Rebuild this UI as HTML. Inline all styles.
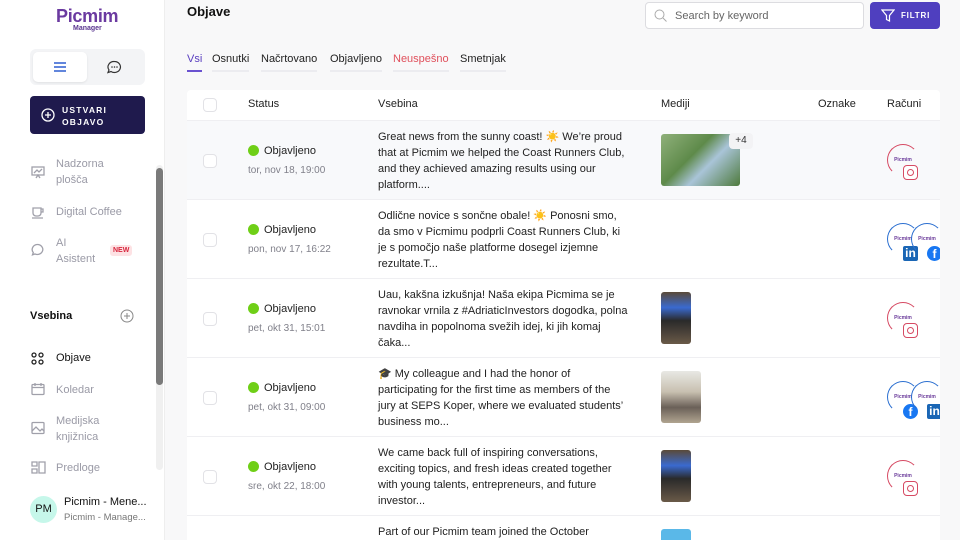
<!DOCTYPE html>
<html style="width:960px;height:540px;overflow:hidden"><head><meta charset="utf-8"><style>
*{box-sizing:border-box;margin:0;padding:0}
body{width:960px;height:540px;overflow:hidden;background:#f8f8f9;font-family:"Liberation Sans",sans-serif;position:relative;color:#1e1e24}
.a{position:absolute}
.side{left:0;top:0;width:165px;height:540px;background:#fff;border-right:1px solid #eee}
.nav{font-size:11px;color:#9a9aa6;line-height:16px}
.ic{stroke:#a0a0aa;fill:none;stroke-width:1.3}
.tab{font-size:11px;top:53px;padding-bottom:5px;border-bottom:2px solid #ececf0;color:#222}
.tbl{left:187px;top:90px;width:753px;height:450px;background:#fff;border-radius:4px 4px 0 0}
.th{font-size:11px;top:98px;color:#222}
.cb{width:14px;height:14px;border:1px solid #e2e2e6;border-radius:4px;background:#fff}
.row{left:187px;width:753px;height:79px;border-top:1px solid #efeff2}
.st{font-size:11px;color:#222}
.dot{display:inline-block;width:11px;height:11px;border-radius:50%;background:#6fcf17;vertical-align:-2px;margin-right:5px}
.dt{font-size:10px;color:#80808a}
.tx{font-size:11px;line-height:16px;color:#222;width:251px}
.av{width:32px;height:32px;border-radius:50%;border:1.5px solid #d64a63;border-right-color:transparent;border-bottom-color:transparent;font-size:5px;color:#6a3a9a;text-align:center;line-height:30px;font-weight:bold;background:transparent}
.ig{width:15px;height:15px;border:1.6px solid #d64a63;border-radius:4px;background:#fff}
.ig:after{content:"";position:absolute;left:3px;top:3px;width:5px;height:5px;border:1.5px solid #d64a63;border-radius:50%}
.li{width:15px;height:15px;background:#1a66b5;color:#fff;font-size:12px;font-weight:bold;line-height:15px;text-align:center;border-radius:2px}
.fb{width:15px;height:15px;background:#1877f2;border-radius:50%;color:#fff;font-size:12px;font-weight:bold;line-height:17px;text-align:center}
.blue{border-color:#2b6fd0;border-right-color:transparent;border-bottom-color:transparent}
</style></head><body>
<div class="a side">
 <div class="a" style="left:56px;top:6px;font-size:18px;font-weight:bold;color:#6b3aa0;letter-spacing:-.3px">Picmim</div>
 <div class="a" style="left:73px;top:25px;font-size:7px;font-weight:bold;color:#5a3590">Manager</div>
 <div class="a" style="left:30px;top:49px;width:115px;height:36px;background:#f3f4f6;border-radius:6px"></div>
 <div class="a" style="left:33px;top:52px;width:54px;height:30px;background:#fff;border-radius:5px;box-shadow:0 1px 2px rgba(0,0,0,.08)"></div>
 <svg class="a" style="left:53px;top:61px" width="14" height="12"><path d="M1 2h12M1 6h12M1 10h12" stroke="#2f5fd0" stroke-width="1.4"/></svg>
 <svg class="a" style="left:107px;top:60px" width="15" height="14"><path d="M7.5 1.5a6 5.5 0 1 1-3.5 10l-3 1 1-2.5a6 5.5 0 0 1 5.5-8.5z" stroke="#333" fill="none" stroke-width="1.2"/><circle cx="5" cy="7" r=".8" fill="#333"/><circle cx="7.5" cy="7" r=".8" fill="#333"/><circle cx="10" cy="7" r=".8" fill="#333"/></svg>
 <div class="a" style="left:30px;top:96px;width:115px;height:38px;background:#1f1a4d;border-radius:4px"></div>
 <svg class="a" style="left:41px;top:108px" width="14" height="14"><circle cx="7" cy="7" r="6" stroke="#fff" fill="none" stroke-width="1.3"/><path d="M7 4v6M4 7h6" stroke="#fff" stroke-width="1.3"/></svg>
 <div class="a" style="left:62px;top:104px;font-size:8.5px;color:#fff;font-weight:bold;letter-spacing:1.2px;line-height:12px">USTVARI<br>OBJAVO</div>
 <svg class="a" style="left:31px;top:165px" width="14" height="14"><rect class="ic" x="1" y="2" width="12" height="8"/><path class="ic" d="M3 8l3-3 2 2 3-3M5 13l2-3 2 3"/></svg>
 <div class="a nav" style="left:56px;top:156px">Nadzorna<br>plošča</div>
 <svg class="a" style="left:31px;top:205px" width="14" height="14"><path class="ic" d="M2 3h8v5a3 3 0 0 1-3 3H5a3 3 0 0 1-3-3zM10 4h2v3h-2M1 13h11"/></svg>
 <div class="a nav" style="left:56px;top:204px">Digital Coffee</div>
 <svg class="a" style="left:31px;top:243px" width="14" height="14"><path class="ic" d="M7 1.5a5.5 5 0 1 1-3 9.5l-2.5.8.8-2.3A5.5 5 0 0 1 7 1.5z"/></svg>
 <div class="a nav" style="left:56px;top:235px">AI<br>Asistent</div>
 <div class="a" style="left:110px;top:245px;background:#fde2e4;color:#d7263d;font-size:7px;font-weight:bold;padding:2px 3px;border-radius:3px">NEW</div>
 <div class="a" style="left:30px;top:310px;font-size:11px;font-weight:bold;color:#111">Vsebina</div>
 <svg class="a" style="left:120px;top:309px" width="14" height="14"><circle cx="7" cy="7" r="6" stroke="#888" fill="none"/><path d="M7 4v6M4 7h6" stroke="#888"/></svg>
 <svg class="a" style="left:31px;top:352px" width="13" height="13"><g stroke="#222" fill="none" stroke-width="1.3"><circle cx="3" cy="3" r="2"/><circle cx="10" cy="3" r="2"/><circle cx="3" cy="10" r="2"/><circle cx="10" cy="10" r="2"/></g></svg>
 <div class="a" style="left:56px;top:352px;font-size:11px;color:#111">Objave</div>
 <svg class="a" style="left:31px;top:382px" width="14" height="14"><rect class="ic" x="1" y="2.5" width="12" height="10" rx="1"/><path class="ic" d="M1 5.5h12M4 1v3M10 1v3"/></svg>
 <div class="a nav" style="left:56px;top:382px">Koledar</div>
 <svg class="a" style="left:31px;top:421px" width="14" height="14"><rect class="ic" x="1" y="1.5" width="12" height="11" rx="1"/><path class="ic" d="M1 10l4-4 4 4 2-2 2 2"/></svg>
 <div class="a nav" style="left:56px;top:413px">Medijska<br>knjižnica</div>
 <svg class="a" style="left:31px;top:461px" width="15" height="13"><path class="ic" d="M1 1h5v4H1zM1 8h5v4H1zM8 1h6v11H8z"/></svg>
 <div class="a nav" style="left:56px;top:460px">Predloge</div>
 <div class="a" style="left:156px;top:165px;width:7px;height:305px;background:#f0f0f0;border-radius:4px"></div>
 <div class="a" style="left:156px;top:168px;width:7px;height:217px;background:#7a7a7a;border-radius:4px"></div>
 <div class="a" style="left:30px;top:496px;width:27px;height:27px;border-radius:50%;background:#c6f7ea;font-size:11px;line-height:27px;text-align:center;color:#111">PM</div>
 <div class="a" style="left:64px;top:496px;font-size:11px;color:#111">Picmim - Mene...</div>
 <div class="a" style="left:64px;top:512px;font-size:9.5px;color:#777">Picmim - Manage...</div>
</div>

<div class="a" style="left:187px;top:4px;font-size:13px;font-weight:bold;color:#111">Objave</div>
<div class="a" style="left:645px;top:2px;width:219px;height:27px;background:#fff;border:1px solid #dcdce0;border-radius:4px"></div>
<svg class="a" style="left:654px;top:9px" width="13" height="13"><circle cx="5.5" cy="5.5" r="4.5" stroke="#aaa" fill="none"/><path d="M9 9l3.5 3.5" stroke="#aaa"/></svg>
<div class="a" style="left:675px;top:10px;font-size:11px;color:#666">Search by keyword</div>
<div class="a" style="left:870px;top:2px;width:70px;height:27px;background:#4f3fbf;border-radius:4px"></div>
<svg class="a" style="left:881px;top:9px" width="14" height="13"><path d="M1 1h12L8.5 6.5V12l-3-1.5V6.5z" stroke="#fff" fill="none" stroke-width="1.2"/></svg>
<div class="a" style="left:901px;top:11px;font-size:8px;color:#fff;font-weight:bold;letter-spacing:.8px">FILTRI</div>

<div class="a tab" style="left:187px;color:#5a3fc0;border-bottom-color:#6a52d0">Vsi</div>
<div class="a tab" style="left:212px">Osnutki</div>
<div class="a tab" style="left:261px">Načrtovano</div>
<div class="a tab" style="left:330px">Objavljeno</div>
<div class="a tab" style="left:393px;color:#e0505c">Neuspešno</div>
<div class="a tab" style="left:460px">Smetnjak</div>

<div class="a tbl"></div>
<div class="a cb" style="left:203px;top:98px"></div>
<div class="a th" style="left:248px">Status</div>
<div class="a th" style="left:378px">Vsebina</div>
<div class="a th" style="left:661px">Mediji</div>
<div class="a th" style="left:818px">Oznake</div>
<div class="a th" style="left:887px">Računi</div>

<div class="a row" style="top:120px;background:#f8f9fb"></div>
<div class="a row" style="top:199px"></div>
<div class="a row" style="top:278px"></div>
<div class="a row" style="top:357px"></div>
<div class="a row" style="top:436px"></div>
<div class="a row" style="top:515px;height:25px"></div>

<div class="a cb" style="left:203px;top:154px"></div>
<div class="a st" style="left:248px;top:145px"><span class="dot"></span>Objavljeno</div>
<div class="a dt" style="left:248px;top:165px">tor, nov 18, 19:00</div>
<div class="a tx" style="left:378px;top:129px">Great news from the sunny coast! ☀️ We’re proud that at Picmim we helped the Coast Runners Club, and they achieved amazing results using our platform....</div>
<div class="a" style="left:661px;top:134px;width:79px;height:52px;border-radius:3px;background:linear-gradient(135deg,#8fb07a,#5e8a4a 40%,#a9c4d8 60%,#4e7a3c)"></div>
<div class="a" style="left:729px;top:133px;width:24px;height:16px;background:#f3f3f5;border-radius:4px;font-size:10px;text-align:center;line-height:16px;color:#333">+4</div>
<div class="a av" style="left:887px;top:144px">Picmim</div><div class="a ig" style="left:903px;top:165px"></div>

<div class="a cb" style="left:203px;top:233px"></div>
<div class="a st" style="left:248px;top:224px"><span class="dot"></span>Objavljeno</div>
<div class="a dt" style="left:248px;top:244px">pon, nov 17, 16:22</div>
<div class="a tx" style="left:378px;top:208px">Odlične novice s sončne obale! ☀️ Ponosni smo, da smo v Picmimu podprli Coast Runners Club, ki je s pomočjo naše platforme dosegel izjemne rezultate.T...</div>
<div class="a av blue" style="left:887px;top:223px">Picmim</div><div class="a li" style="left:903px;top:246px">in</div>
<div class="a av blue" style="left:911px;top:223px">Picmim</div><div class="a fb" style="left:927px;top:246px">f</div>

<div class="a cb" style="left:203px;top:312px"></div>
<div class="a st" style="left:248px;top:303px"><span class="dot"></span>Objavljeno</div>
<div class="a dt" style="left:248px;top:323px">pet, okt 31, 15:01</div>
<div class="a tx" style="left:378px;top:287px">Uau, kakšna izkušnja! Naša ekipa Picmima se je ravnokar vrnila z #AdriaticInvestors dogodka, polna navdiha in popolnoma svežih idej, ki jih komaj čaka...</div>
<div class="a" style="left:661px;top:292px;width:30px;height:52px;border-radius:3px;background:linear-gradient(#5a4a38,#3a6ad0 30%,#2a2a2a 55%,#6a5a48)"></div>
<div class="a av" style="left:887px;top:302px">Picmim</div><div class="a ig" style="left:903px;top:323px"></div>

<div class="a cb" style="left:203px;top:391px"></div>
<div class="a st" style="left:248px;top:382px"><span class="dot"></span>Objavljeno</div>
<div class="a dt" style="left:248px;top:402px">pet, okt 31, 09:00</div>
<div class="a tx" style="left:378px;top:366px">🎓 My colleague and I had the honor of participating for the first time as members of the jury at SEPS Koper, where we evaluated students’ business mo...</div>
<div class="a" style="left:661px;top:371px;width:40px;height:52px;border-radius:3px;background:linear-gradient(#e8e8e4,#c8c0b0 40%,#6a6058 70%,#b0a490)"></div>
<div class="a av blue" style="left:887px;top:381px">Picmim</div><div class="a fb" style="left:903px;top:404px">f</div>
<div class="a av blue" style="left:911px;top:381px">Picmim</div><div class="a li" style="left:927px;top:404px">in</div>

<div class="a cb" style="left:203px;top:470px"></div>
<div class="a st" style="left:248px;top:461px"><span class="dot"></span>Objavljeno</div>
<div class="a dt" style="left:248px;top:481px">sre, okt 22, 18:00</div>
<div class="a tx" style="left:378px;top:445px">We came back full of inspiring conversations, exciting topics, and fresh ideas created together with young talents, entrepreneurs, and future investor...</div>
<div class="a" style="left:661px;top:450px;width:30px;height:52px;border-radius:3px;background:linear-gradient(#5a4a38,#3a6ad0 30%,#2a2a2a 55%,#6a5a48)"></div>
<div class="a av" style="left:887px;top:460px">Picmim</div><div class="a ig" style="left:903px;top:481px"></div>

<div class="a tx" style="left:378px;top:524px">Part of our Picmim team joined the October</div>
<div class="a" style="left:661px;top:529px;width:30px;height:11px;border-radius:3px 3px 0 0;background:#5ab8e8"></div>
<div class="a" style="left:940px;top:0;width:20px;height:540px;background:#f8f8f9"></div>
</body></html>
